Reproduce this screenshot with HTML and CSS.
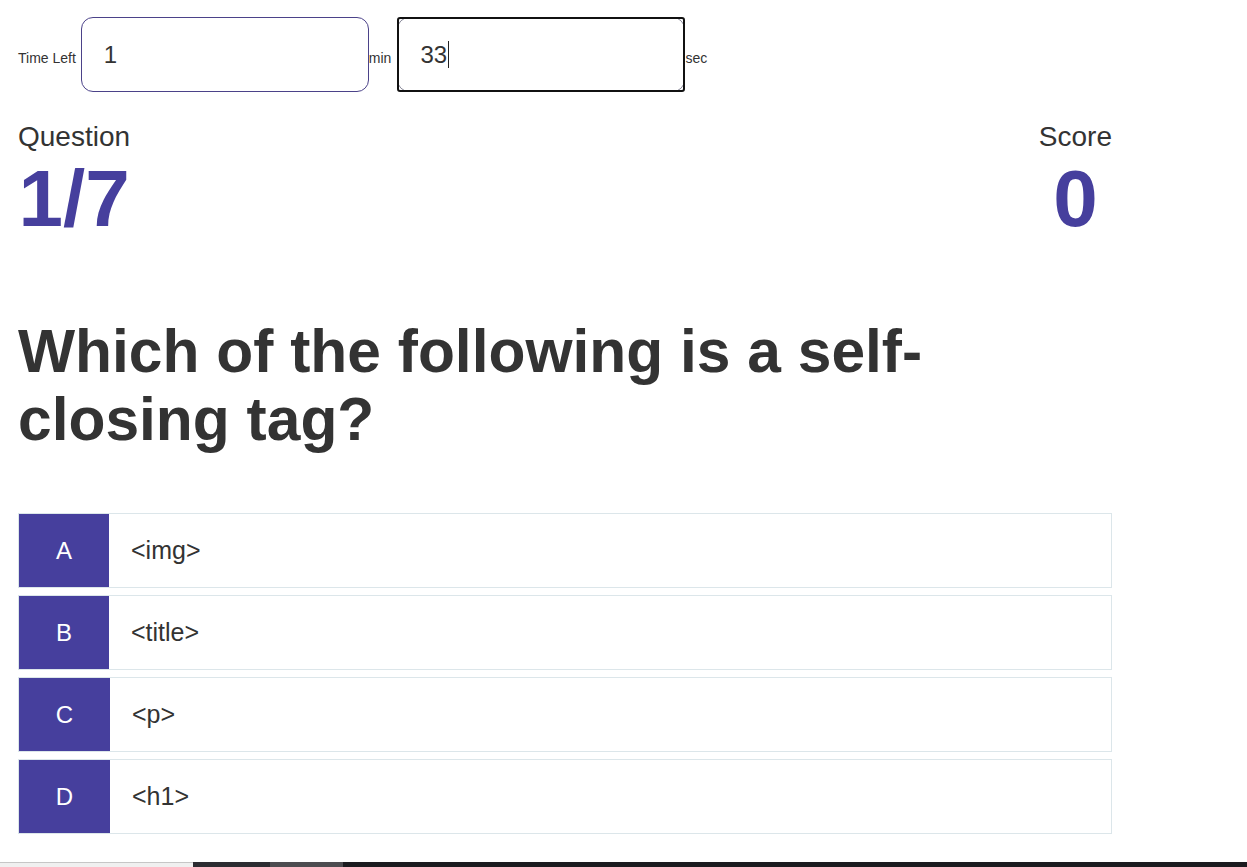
FILE: index.html
```html
<!DOCTYPE html>
<html lang="en">
<head>
<meta charset="utf-8">
<title>Quiz</title>
<link rel="stylesheet" href="styles.css">
</head>
<body>
<div class="page">
  <main class="quiz">
    <div class="timer">
      <span class="timer-label">Time Left</span>
      <input class="time-input" type="text" value="1">
      <span class="unit unit-min">min</span>
      <span class="focus-wrap"><input class="time-input" type="text" value="33"><span class="caret-text">33<span class="caret"></span></span></span>
      <span class="unit">sec</span>
    </div>

    <div class="stats">
      <div class="stat">
        <div class="stat-label">Question</div>
        <div class="stat-value">1/7</div>
      </div>
      <div class="stat">
        <div class="stat-label">Score</div>
        <div class="stat-value">0</div>
      </div>
    </div>

    <h1 class="question">Which of the following is a self-closing tag?</h1>

    <ul class="options">
      <li class="option"><span class="letter">A</span><span class="answer">&lt;img&gt;</span></li>
      <li class="option"><span class="letter">B</span><span class="answer">&lt;title&gt;</span></li>
      <li class="option"><span class="letter letter-wide">C</span><span class="answer">&lt;p&gt;</span></li>
      <li class="option"><span class="letter letter-wide">D</span><span class="answer">&lt;h1&gt;</span></li>
    </ul>
  </main>

  <div class="taskbar">
    <span class="tb-light"></span>
    <span class="tb-dark"></span>
    <span class="tb-mid"></span>
    <span class="tb-rest"></span>
  </div>
</div>
</body>
</html>
```

FILE: styles.css
```css
* { box-sizing: border-box; }

html, body {
  margin: 0;
  padding: 0;
  background: #ffffff;
}

body {
  font-family: "Liberation Sans", Arial, sans-serif;
  color: #333333;
}

.page {
  min-height: 100vh;
  display: flex;
  flex-direction: column;
}

.quiz {
  width: 1130px;
  padding: 17px 18px 0 18px;
}

/* timer row */
.timer {
  display: flex;
  align-items: baseline;
  height: 75px;
}

.timer-label,
.unit {
  font-size: 14px;
  color: #333;
}

.timer-label { margin-right: 5px; }
.unit-min { margin-right: 6px; }

.time-input {
  width: 288px;
  height: 75px;
  border: 1px solid #4b4289;
  border-radius: 12px;
  padding: 0 22px;
  font-family: "Liberation Sans", Arial, sans-serif;
  font-size: 24px;
  color: #333;
  background: #fff;
  outline: none;
}

.focus-wrap {
  position: relative;
  display: inline-block;
  width: 288px;
  height: 75px;
}

.focus-wrap .time-input {
  border-color: #8a8a9a;
  color: transparent;
}

.focus-wrap::after {
  content: "";
  position: absolute;
  inset: 0;
  border: 2px solid #111111;
  border-radius: 3px;
  pointer-events: none;
}

.caret-text {
  position: absolute;
  left: 23px;
  top: 0;
  height: 75px;
  display: flex;
  align-items: center;
  font-size: 24px;
  color: #333;
  pointer-events: none;
}

.caret {
  display: inline-block;
  width: 1px;
  height: 27px;
  background: #222;
  margin-left: 1px;
}

/* stats */
.stats {
  display: flex;
  justify-content: space-between;
  margin-top: 29px;
}

.stat { text-align: center; }

.stat-label {
  font-size: 28px;
  line-height: 32px;
  color: #333;
}

.stat-value {
  font-size: 80px;
  font-weight: 700;
  line-height: 92px;
  color: #463f9d;
}

/* question */
.question {
  margin: 72px 0 0 0;
  font-size: 60.5px;
  font-weight: 700;
  line-height: 68px;
  color: #333333;
}

/* options */
.options {
  list-style: none;
  margin: 60px 0 0 0;
  padding: 0;
  display: flex;
  flex-direction: column;
  gap: 7px;
}

.option {
  display: flex;
  align-items: stretch;
  height: 75px;
  border: 1px solid #dce6ea;
  background: #fff;
}

.letter {
  width: 90px;
  background: #463f9d;
  color: #ffffff;
  font-size: 24px;
  display: flex;
  align-items: center;
  justify-content: center;
}

.letter-wide { width: 91px; }

.answer {
  display: flex;
  align-items: center;
  padding-left: 22px;
  font-size: 25px;
  color: #333;
}

/* bottom strip */
.taskbar {
  margin-top: auto;
  display: flex;
  height: 5px;
}

.tb-light { width: 193px; background: #f0f0f0; border-top: 1px solid #c6c6c6; }
.tb-dark { width: 77px; background: #2c2c31; }
.tb-mid { width: 73px; background: #4c4c50; }
.tb-rest { flex: 1; background: #1b1b1f; }
```
